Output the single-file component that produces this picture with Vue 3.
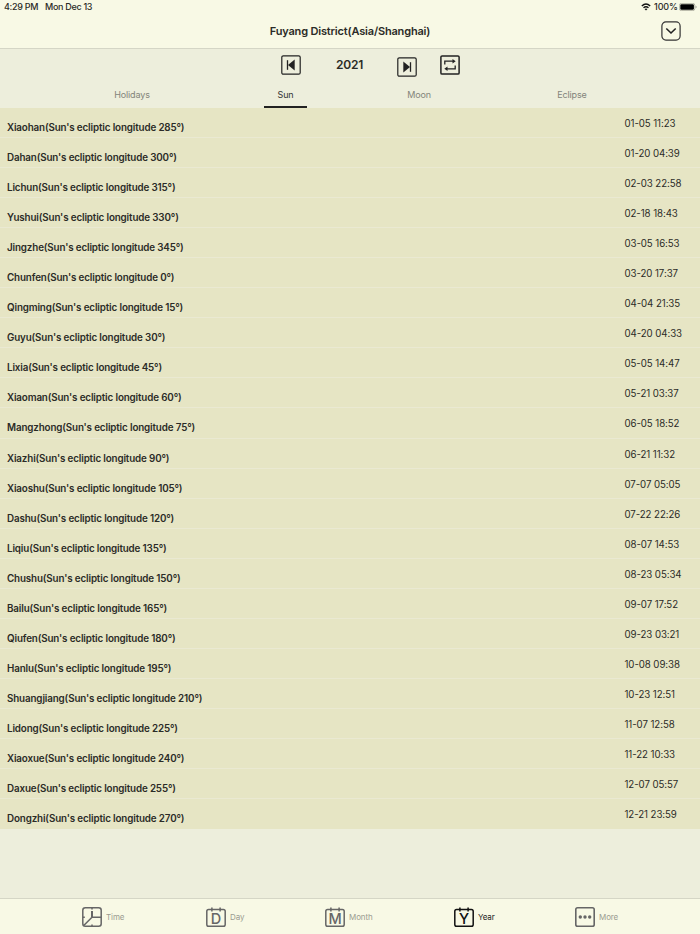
<script setup>
import { ref } from 'vue'

const year = ref(2021)
const activeTab = ref('Sun')
const activeMenu = ref('Year')

const tabs = ['Holidays', 'Sun', 'Moon', 'Eclipse']

const menus = [
  { name: 'Time', icon: 'clock' },
  { name: 'Day', icon: 'calendar', letter: 'D' },
  { name: 'Month', icon: 'calendar', letter: 'M' },
  { name: 'Year', icon: 'calendar', letter: 'Y' },
  { name: 'More', icon: 'more' }
]

const terms = [
  { name: 'Xiaohan', degree: 285, time: '01-05 11:23' },
  { name: 'Dahan', degree: 300, time: '01-20 04:39' },
  { name: 'Lichun', degree: 315, time: '02-03 22:58' },
  { name: 'Yushui', degree: 330, time: '02-18 18:43' },
  { name: 'Jingzhe', degree: 345, time: '03-05 16:53' },
  { name: 'Chunfen', degree: 0, time: '03-20 17:37' },
  { name: 'Qingming', degree: 15, time: '04-04 21:35' },
  { name: 'Guyu', degree: 30, time: '04-20 04:33' },
  { name: 'Lixia', degree: 45, time: '05-05 14:47' },
  { name: 'Xiaoman', degree: 60, time: '05-21 03:37' },
  { name: 'Mangzhong', degree: 75, time: '06-05 18:52' },
  { name: 'Xiazhi', degree: 90, time: '06-21 11:32' },
  { name: 'Xiaoshu', degree: 105, time: '07-07 05:05' },
  { name: 'Dashu', degree: 120, time: '07-22 22:26' },
  { name: 'Liqiu', degree: 135, time: '08-07 14:53' },
  { name: 'Chushu', degree: 150, time: '08-23 05:34' },
  { name: 'Bailu', degree: 165, time: '09-07 17:52' },
  { name: 'Qiufen', degree: 180, time: '09-23 03:21' },
  { name: 'Hanlu', degree: 195, time: '10-08 09:38' },
  { name: 'Shuangjiang', degree: 210, time: '10-23 12:51' },
  { name: 'Lidong', degree: 225, time: '11-07 12:58' },
  { name: 'Xiaoxue', degree: 240, time: '11-22 10:33' },
  { name: 'Daxue', degree: 255, time: '12-07 05:57' },
  { name: 'Dongzhi', degree: 270, time: '12-21 23:59' }
]
</script>

<template>
  <div class="page">
    <header class="header">
      <div class="status-bar">
        <span class="clock">4:29 PM</span>
        <span class="date">Mon Dec 13</span>
        <svg class="wifi" viewBox="0 0 10 8" width="10" height="8">
          <path d="M.8 3Q5-.8 9.200 3M2.500 4.800Q5 2.700 7.500 4.800" fill="none" stroke="#111" stroke-width="1.400" />
          <path d="M3.500 6Q5 4.900 6.500 6L5 7.600z" fill="#111" />
        </svg>
        <span class="percent">100%</span>
        <svg class="battery" viewBox="0 0 18 8" width="18" height="8">
          <rect x=".4" y=".4" width="15.400" height="7.200" rx="2" fill="none" stroke="#999a8c" stroke-width=".7" />
          <rect x="1.300" y="1.300" width="13.600" height="5.400" rx="1.200" fill="#000" />
          <path d="M16.600 2.700q1 .3 1 1.300t-1 1.300z" fill="#999a8c" />
        </svg>
      </div>
      <div class="title-bar">
        <h1 class="title">Fuyang District(Asia/Shanghai)</h1>
        <button class="icon-button">
          <svg viewBox="0 0 20 20" width="20" height="20">
            <rect x=".9" y=".9" width="18.200" height="18.200" rx="4" fill="none" stroke="#333" stroke-width="1.200" />
            <path d="M5.300 7.500l4.700 4.500L14.700 7.500" fill="none" stroke="#222" stroke-width="1.600" />
          </svg>
        </button>
      </div>
    </header>

    <div class="year-bar">
      <button class="icon-button prev" @click="year--">
        <svg viewBox="0 0 20 20" width="20" height="20">
          <rect x=".8" y=".8" width="18.400" height="18.400" rx="1.500" fill="none" stroke="#222" stroke-width="1.200" />
          <path d="M6.500 5.200v9.600" stroke="#222" stroke-width="1.300" />
          <path d="M13.700 4.500v11L7 10z" fill="#222" />
        </svg>
      </button>
      <span class="current-year">{{ year }}</span>
      <button class="icon-button next" @click="year++">
        <svg viewBox="0 0 20 20" width="20" height="20">
          <rect x=".8" y=".8" width="18.400" height="18.400" rx="1.500" fill="none" stroke="#222" stroke-width="1.200" />
          <path d="M13.500 5.200v9.600" stroke="#222" stroke-width="1.300" />
          <path d="M6.300 4.500v11L13 10z" fill="#222" />
        </svg>
      </button>
      <button class="icon-button repeat" @click="year = 2021">
        <svg viewBox="0 0 20 20" width="20" height="20">
          <rect x=".9" y=".9" width="18.200" height="18.200" rx="1.200" fill="none" stroke="#222" stroke-width="1.500" />
          <path d="M4.800 9.500V6.200H13M15.200 10.500v3.300H7" fill="none" stroke="#222" stroke-width="1.300" />
          <path d="M12.500 4l3.200 2.200-3.200 2.200zM7.500 11.600l-3.200 2.200L7.500 16z" fill="#222" />
        </svg>
      </button>
    </div>

    <nav class="tabs">
      <button
        v-for="tab in tabs"
        :key="tab"
        :class="['tab', tab.toLowerCase(), { active: activeTab === tab }]"
        @click="activeTab = tab"
      >
        {{ tab }}
      </button>
    </nav>

    <ul class="term-list">
      <li v-for="term in terms" :key="term.name" class="term">
        <span class="term-name">{{ term.name }}(Sun's ecliptic longitude {{ term.degree }}°)</span>
        <span class="term-time">{{ term.time }}</span>
      </li>
    </ul>

    <footer class="menu-bar">
      <button
        v-for="menu in menus"
        :key="menu.name"
        :class="['menu', menu.name.toLowerCase(), { active: activeMenu === menu.name }]"
        @click="activeMenu = menu.name"
      >
        <svg class="menu-icon" viewBox="0 0 20 20" width="20" height="20" fill="none" stroke="currentColor">
          <template v-if="menu.icon === 'clock'">
            <rect x=".8" y=".8" width="18.400" height="18.400" rx="2.500" stroke-width="1.500" />
            <path d="M10 4v6.200" stroke-width="2" />
            <path d="M10 10.200h9M10 10.200L2 18.300M10 1v1.500M10 17.500V19M1 10.200h1.800" stroke-width="1.500" />
          </template>
          <template v-else-if="menu.icon === 'calendar'">
            <rect x=".8" y="2.500" width="18.400" height="16.700" rx="1.800" stroke-width="1.500" />
            <path d="M5.900.4v4.200M14.100.4v4.200" stroke-width="1.500" />
            <text x="10" y="16.500" text-anchor="middle" class="letter">{{ menu.letter }}</text>
          </template>
          <template v-else>
            <rect x=".8" y=".8" width="18.400" height="18.400" rx="1.800" stroke-width="1.600" />
            <g fill="currentColor" stroke="none">
              <circle cx="5.300" cy="10" r="1.700" />
              <circle cx="10" cy="10" r="1.700" />
              <circle cx="14.700" cy="10" r="1.700" />
            </g>
          </template>
        </svg>
        <span>{{ menu.name }}</span>
      </button>
    </footer>
  </div>
</template>

<style>
body {
  margin: 0;
}
</style>

<style scoped>
.page {
  display: flex;
  flex-direction: column;
  width: 700px;
  height: 934px;
  overflow: hidden;
  background-color: #edeedc;
  color: #2b2b27;
  font-family: Inter, 'Liberation Sans', sans-serif;
}

button {
  padding: 0;
  border: none;
  background: none;
  font-family: inherit;
  cursor: pointer;
}

svg {
  display: block;
  flex: none;
}

.header {
  box-sizing: border-box;
  height: 49px;
  border-bottom: 1px solid #d5d6c6;
  background-color: #f8f9e5;
}

.status-bar {
  display: flex;
  align-items: center;
  height: 14px;
  padding: 0 3px 0 4px;
  font-size: 9px;
  font-weight: 500;
  line-height: 14px;
  letter-spacing: -0.3px;
  white-space: nowrap;
}

.clock {
  width: 41px;
}

.wifi {
  margin-left: auto;
}

.percent {
  width: 22px;
  margin: 0 3px;
  letter-spacing: -0.1px;
}

.title-bar {
  display: grid;
  grid-template-columns: 1fr auto 1fr;
  align-items: center;
  height: 34px;
  padding: 0 19px;
}

.title {
  grid-column: 2;
  margin: 0;
  font-size: 11px;
  font-weight: 600;
  letter-spacing: -0.17px;
}

.title-bar .icon-button {
  justify-self: end;
}

.year-bar {
  display: flex;
  align-items: flex-start;
  height: 32px;
  padding: 5.500px 0 0 281px;
  box-sizing: border-box;
}

.current-year {
  width: 95px;
  line-height: 20px;
  text-align: center;
  font-size: 12px;
  font-weight: 600;
  letter-spacing: -0.2px;
}

.prev {
  margin-right: 1px;
}

.next {
  margin-top: 2px;
}

.repeat {
  margin-left: 23px;
}

.tabs {
  display: flex;
  height: 27px;
  padding-left: 101px;
}

.tab {
  box-sizing: border-box;
  width: 62px;
  padding-top: 2px;
  border-bottom: 2px solid transparent;
  color: #83847a;
  font-size: 9px;
  letter-spacing: -0.15px;
}

.tab.sun {
  width: 43px;
  margin-left: 101px;
}

.tab.moon {
  width: 50px;
  margin-left: 87px;
}

.tab.eclipse {
  width: 56px;
  margin-left: 100px;
}

.tab.active {
  border-bottom-color: #222;
  color: #333;
}

.term-list {
  margin: 0;
  padding: 0;
  list-style: none;
}

.term {
  box-sizing: border-box;
  display: flex;
  justify-content: space-between;
  height: 30.050px;
  padding: 0 0 0 7px;
  border-bottom: 1px solid #eae9d2;
  background-color: #e6e5c4;
  white-space: nowrap;
}

.term:last-child {
  border-bottom: none;
}

.term-name {
  padding-top: 12px;
  font-size: 9.800px;
  font-weight: 600;
  line-height: 15px;
  letter-spacing: -0.13px;
}

.term-time {
  width: 75.500px;
  padding-top: 8px;
  font-size: 9.700px;
  line-height: 15px;
  letter-spacing: -0.08px;
}

.menu-bar {
  box-sizing: border-box;
  display: flex;
  height: 36px;
  margin-top: auto;
  padding-left: 82px;
  border-top: 1px solid #d5d6c6;
  background-color: #f8f9e5;
}

.menu {
  display: flex;
  align-items: center;
  gap: 4px;
  width: 124px;
  color: #9b9c91;
  font-size: 8px;
  letter-spacing: -0.1px;
}

.menu.day {
  width: 119px;
}

.menu.month {
  width: 129px;
}

.menu.year {
  width: 121px;
}

.menu-icon {
  color: #666;
}

.menu.active {
  color: #222;
}

.menu.active .menu-icon {
  color: #111;
}

.letter {
  fill: currentColor;
  stroke: none;
  font-size: 14.500px;
  font-weight: 500;
}
</style>
